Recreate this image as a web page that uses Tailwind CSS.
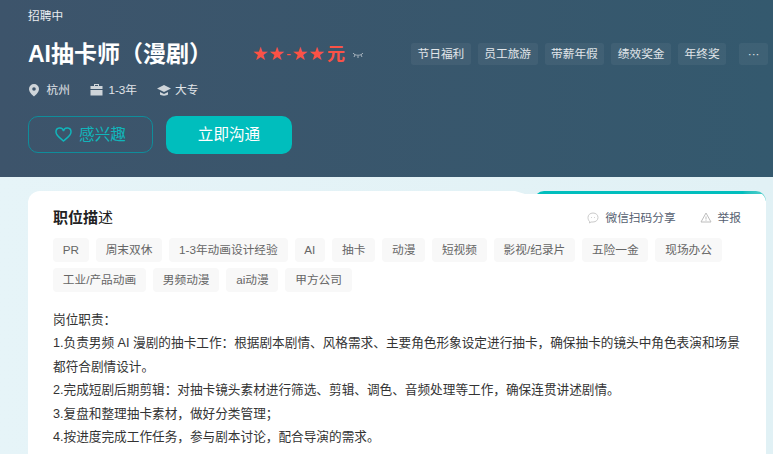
<!DOCTYPE html>
<html lang="zh-CN">
<head>
<meta charset="UTF-8">
<title>AI抽卡师（漫剧）</title>
<script src="https://cdn.jsdelivr.net/npm/@tailwindcss/browser@4"></script>
</head>
<body class="h-[454px] w-[773px] overflow-hidden bg-[#e3f2f6] font-['Liberation_Sans','Noto_Sans_CJK_SC',sans-serif]">
  <header class="h-[177px] bg-gradient-to-r from-[#3d546b] to-[#34596e] px-[28px] pt-[8px] text-white">
    <p class="text-[11.7px] leading-[16px] text-white/90">招聘中</p>
    <div class="mt-[13px] flex h-[34px] items-center">
      <h1 class="w-[224px] shrink-0 text-[23px] font-bold leading-[34px]">AI抽卡师（漫剧）</h1>
      <div class="flex w-[159px] shrink-0 items-center leading-[34px] text-[#fb5246]">
        <span class="font-['DejaVu_Sans'] text-[18.500px]">★★</span><span class="mx-[1px] text-[14px]">-</span><span class="font-['DejaVu_Sans'] text-[18.500px]">★★</span><span class="ml-[2px] text-[18px] font-bold">元</span>
        <svg class="ml-[7px] mt-[2px]" width="12" height="8" viewBox="0 0 12 8" fill="none" stroke="#a9b5bf" stroke-width="1"><path d="M1 2c2 3 8 3 10 0M3 4L2 6M6 5v2M9 4l1 2"/></svg>
      </div>
      <ul class="flex gap-[7px] whitespace-nowrap text-[11.7px] leading-[22px] text-white/85">
        <li class="rounded-[3px] bg-white/5 px-[6.500px]">节日福利</li>
        <li class="rounded-[3px] bg-white/5 px-[6.500px]">员工旅游</li>
        <li class="rounded-[3px] bg-white/5 px-[6.500px]">带薪年假</li>
        <li class="rounded-[3px] bg-white/5 px-[6.500px]">绩效奖金</li>
        <li class="rounded-[3px] bg-white/5 px-[6.500px]">年终奖</li>
        <li class="ml-[6px] w-[29px] rounded-[3px] bg-white/5 text-center">···</li>
      </ul>
    </div>
    <div class="mt-[7px] flex h-[24px] items-center text-[11.7px] text-white/85">
      <svg width="12" height="14" viewBox="0 0 12 14" fill="#cfd5da"><path fill-rule="evenodd" d="M6 1a5 5 0 0 1 5 5c0 3-3 6-5 7.500C4 12 1 9 1 6a5 5 0 0 1 5-5zm0 3.200a1.800 1.800 0 1 0 0 3.600 1.800 1.800 0 0 0 0-3.600z"/></svg>
      <span class="ml-[6.500px]">杭州</span>
      <svg class="ml-[20.500px]" width="13" height="12" viewBox="0 0 13 12" fill="#cfd5da"><path d="M4 0h5v2h3.500v3H.5V2H4zm1 1v1h3V1zM.5 6h12v5.500H.5z"/></svg>
      <span class="ml-[5px]">1-3年</span>
      <svg class="ml-[20px]" width="14" height="13" viewBox="0 0 14 13" fill="#cfd5da"><path d="M7 1l7 3.500L7 8 0 4.500zM3 8l4 2 4-2v2.500C10 12 4 12 3 10.500z"/></svg>
      <span class="ml-[4px]">大专</span>
    </div>
    <div class="mt-[14px] flex gap-[13px]">
      <button class="flex h-[37px] w-[125px] items-center justify-center gap-[7px] rounded-[10px] border border-[#0f8d9b] text-[15.600px] text-[#11b5bb]">
        <svg width="17" height="15" viewBox="0 0 17 15" fill="none" stroke="#11b5bb" stroke-width="1.500"><path d="M8.500 14C5 11 1 8.500 1 5a3.800 3.800 0 0 1 7.500-1A3.800 3.800 0 0 1 16 5c0 3.500-4 6-7.500 9z"/></svg>
        感兴趣
      </button>
      <button class="h-[38px] w-[126px] rounded-[10px] bg-[#00bebd] text-[15.600px] text-white">立即沟通</button>
    </div>
  </header>

  <main class="relative h-[277px] bg-gradient-to-r from-[#e6f4f8] to-[#e1f1f5] px-[28px] pt-[14px]">
    <div class="absolute left-[534px] top-[14px] h-[10px] w-[232px] rounded-t-[10px] bg-gradient-to-r from-[#00bebd] from-90% to-[#4fd0cc]"></div>
    <section class="relative h-[263px] w-[738px] overflow-hidden rounded-t-[12px] bg-white px-[25px] pt-[16px] [clip-path:polygon(0_0,487px_0,497px_3px,100%_3px,100%_100%,0_100%)]">
      <div class="flex h-[22px] items-center justify-between">
        <h2 class="text-[15px] leading-[22px] text-[#222]"><span class="font-bold">职位描</span>述</h2>
        <div class="flex items-center text-[11.7px] text-[#555e70]">
          <svg width="12" height="12" viewBox="0 0 12 12" fill="none" stroke="#c9c9c9"><path d="M6 1c3 0 5 2 5 4.500S9 10 6 10H4l-1.500 1V9.300C1.500 8.500 1 7 1 5.500 1 3 3 1 6 1z"/><path d="M4 5.500h.8M7 5.500h.8"/></svg>
          <span class="ml-[6px]">微信扫码分享</span>
          <svg class="ml-[24px]" width="12" height="11" viewBox="0 0 12 11" fill="none" stroke="#bdbdbd"><path d="M6 1l5 9H1zM6 4.500v3M6 8.300v.7"/></svg>
          <span class="ml-[6px]">举报</span>
        </div>
      </div>
      <ul class="mt-[9px] flex flex-wrap gap-x-[7px] gap-y-[6px] text-[11.7px] leading-[24px] text-[#666]">
        <li class="rounded-[4px] bg-[#f8f8f8] px-[9.800px]">PR</li>
        <li class="rounded-[4px] bg-[#f8f8f8] px-[9.800px]">周末双休</li>
        <li class="rounded-[4px] bg-[#f8f8f8] px-[9.800px]">1-3年动画设计经验</li>
        <li class="rounded-[4px] bg-[#f8f8f8] px-[9.800px]">AI</li>
        <li class="rounded-[4px] bg-[#f8f8f8] px-[9.800px]">抽卡</li>
        <li class="rounded-[4px] bg-[#f8f8f8] px-[9.800px]">动漫</li>
        <li class="rounded-[4px] bg-[#f8f8f8] px-[9.800px]">短视频</li>
        <li class="rounded-[4px] bg-[#f8f8f8] px-[9.800px]">影视/纪录片</li>
        <li class="rounded-[4px] bg-[#f8f8f8] px-[9.800px]">五险一金</li>
        <li class="rounded-[4px] bg-[#f8f8f8] px-[9.800px]">现场办公</li>
        <li class="rounded-[4px] bg-[#f8f8f8] px-[9.800px]">工业/产品动画</li>
        <li class="rounded-[4px] bg-[#f8f8f8] px-[9.800px]">男频动漫</li>
        <li class="rounded-[4px] bg-[#f8f8f8] px-[9.800px]">ai动漫</li>
        <li class="rounded-[4px] bg-[#f8f8f8] px-[9.800px]">甲方公司</li>
      </ul>
      <div class="mt-[17px] text-[12.650px] leading-[23.400px] text-[#333]">
        <p>岗位职责：</p>
        <p>1.负责男频 AI 漫剧的抽卡工作：根据剧本剧情、风格需求、主要角色形象设定进行抽卡，确保抽卡的镜头中角色表演和场景都符合剧情设计。</p>
        <p>2.完成短剧后期剪辑：对抽卡镜头素材进行筛选、剪辑、调色、音频处理等工作，确保连贯讲述剧情。</p>
        <p>3.复盘和整理抽卡素材，做好分类管理；</p>
        <p>4.按进度完成工作任务，参与剧本讨论，配合导演的需求。</p>
      </div>
    </section>
  </main>
</body>
</html>
